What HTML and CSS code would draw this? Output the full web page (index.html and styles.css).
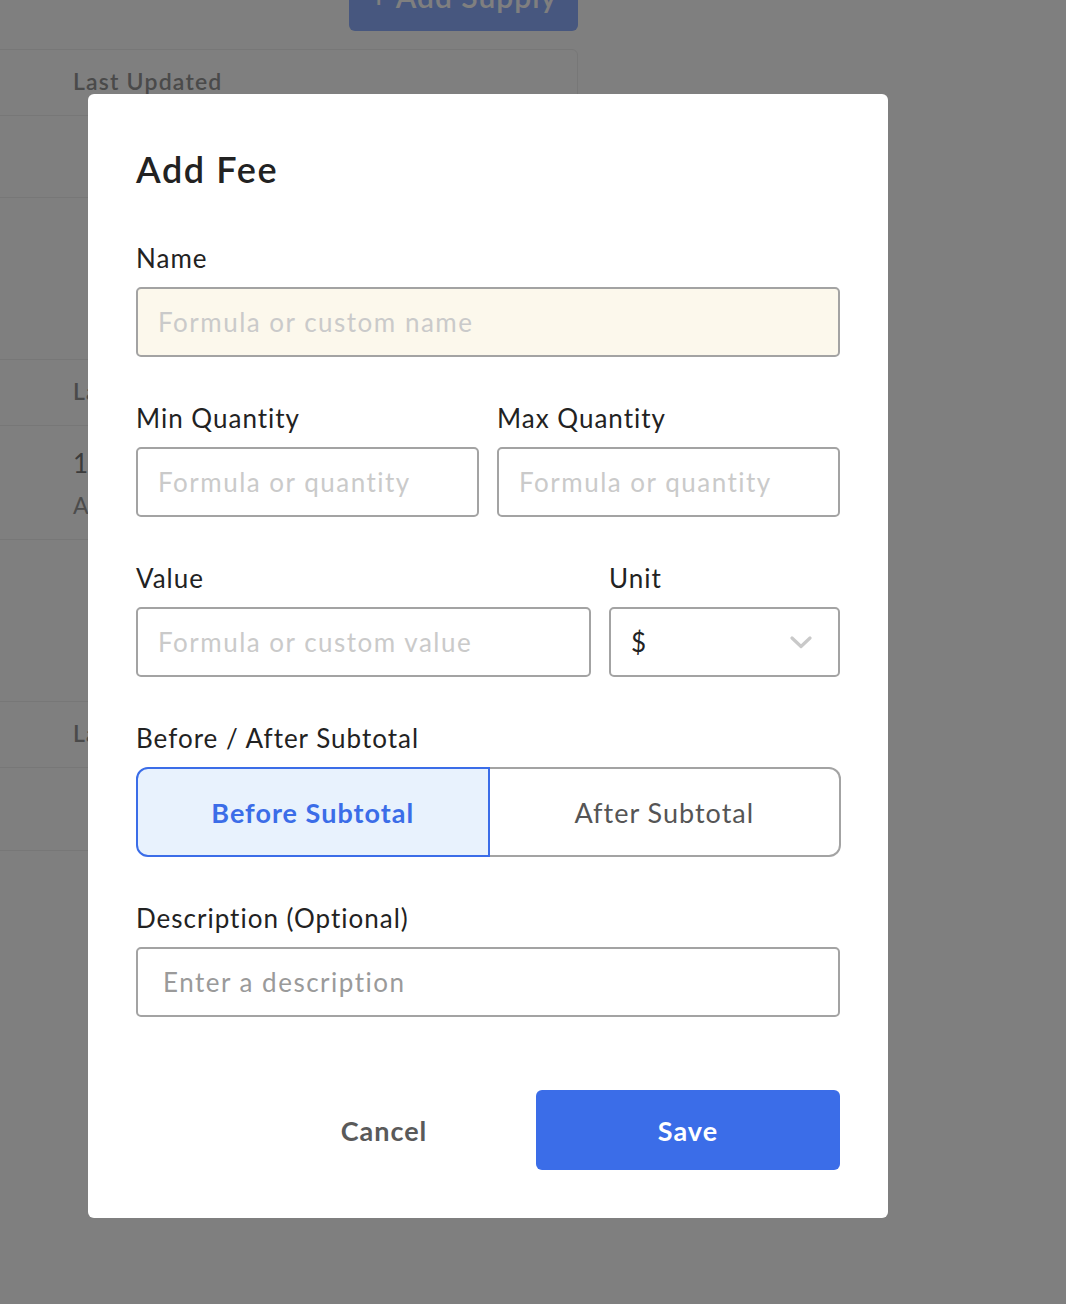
FILE: index.html
```html
<!DOCTYPE html>
<html>
<head>
    <title>Supplies - Add Fee</title>
    <link rel="stylesheet" href="styles.css">
</head>
<body>
    <div class="page">
        <div class="toolbar">
            <button class="add-supply">+ Add Supply</button>
        </div>
        <div class="table-card">
            <div class="row head"><span>Last Updated</span></div>
            <div class="row r82"></div>
            <div class="row r162"></div>
            <div class="row head"><span>Last Updated</span></div>
            <div class="row r114">
                <span class="big">1 day ago</span>
                <span class="small">Admin</span>
            </div>
            <div class="row r162"></div>
            <div class="row head"><span>Last Updated</span></div>
            <div class="row r82"></div>
        </div>
    </div>

    <div class="overlay">
        <div class="modal">
            <h2 class="modal-title">Add Fee</h2>

            <div class="field">
                <label>Name</label>
                <input class="input name-input" type="text" placeholder="Formula or custom name">
            </div>

            <div class="field two-col">
                <div>
                    <label>Min Quantity</label>
                    <input class="input" type="text" placeholder="Formula or quantity">
                </div>
                <div>
                    <label>Max Quantity</label>
                    <input class="input" type="text" placeholder="Formula or quantity">
                </div>
            </div>

            <div class="field value-row">
                <div>
                    <label>Value</label>
                    <input class="input" type="text" placeholder="Formula or custom value">
                </div>
                <div>
                    <label>Unit</label>
                    <div class="select">
                        <span>$</span>
                        <svg width="22" height="13" viewBox="0 0 22 13">
                            <polyline points="2,2 11,10.5 20,2" fill="none" stroke="#c9c9c9" stroke-width="3.2" stroke-linecap="round" stroke-linejoin="round"/>
                        </svg>
                    </div>
                </div>
            </div>

            <div class="field">
                <label>Before / After Subtotal</label>
                <div class="toggle">
                    <button class="toggle-btn active">Before Subtotal</button>
                    <button class="toggle-btn">After Subtotal</button>
                </div>
            </div>

            <div class="field">
                <label>Description (Optional)</label>
                <input class="input desc-input" type="text" placeholder="Enter a description">
            </div>

            <div class="modal-footer">
                <button class="btn-cancel">Cancel</button>
                <button class="btn-save">Save</button>
            </div>
        </div>
    </div>
</body>
</html>
```

FILE: styles.css
```css
body {
    margin: 0;
    padding: 0;
    font-family: Lato, "Open Sans", Arial, sans-serif;
    background-color: #fff;
    height: 1304px;
    overflow: hidden;
}

/* page behind the dialog */
.page {
    width: 578px;
}

.toolbar {
    display: flex;
    justify-content: flex-end;
    height: 31px;
}

.add-supply {
    box-sizing: border-box;
    width: 229px;
    height: 44px;
    margin-top: -13px;
    padding: 0 0 27px;
    border: none;
    border-radius: 6px;
    background-color: #8eaeff;
    color: #fff;
    font-family: inherit;
    font-size: 30px;
    font-weight: 600;
    letter-spacing: 1px;
    line-height: 10px;
}

.table-card {
    margin-top: 18px;
    margin-left: -20px;
    border: 1px solid #eee;
    border-radius: 6px;
}

.row {
    border-bottom: 1px solid #eee;
    box-sizing: border-box;
    padding-left: 92px;
    display: flex;
    flex-direction: column;
    justify-content: center;
}

.row:last-child {
    border-bottom: none;
}

.row.head {
    height: 66px;
    padding-bottom: 3px;
    font-size: 23px;
    font-weight: 600;
    letter-spacing: 1.2px;
    color: #949494;
}

.r82 { height: 82px; }
.r162 { height: 162px; }
.r114 { height: 114px; }

.row .big {
    font-size: 26px;
    color: #777;
}

.row .small {
    margin-top: 12px;
    font-size: 23px;
    color: #999;
}

/* dialog */
.overlay {
    position: fixed;
    inset: 0;
    background-color: rgba(0, 0, 0, 0.5);
    padding: 94px 0 0 88px;
}

.modal {
    width: 800px;
    box-sizing: border-box;
    padding: 48px;
    background-color: #fff;
    border-radius: 6px;
    color: #222;
}

.modal-title {
    margin: 6px 0 52px;
    font-size: 36px;
    line-height: 42px;
    font-weight: 600;
    letter-spacing: 1.6px;
}

.field {
    margin-bottom: 45px;
}

.field label {
    display: block;
    font-size: 26px;
    line-height: 32px;
    margin-bottom: 13px;
    letter-spacing: 1px;
}

.two-col {
    display: grid;
    grid-template-columns: 1fr 1fr;
    gap: 18px;
}

.value-row {
    display: grid;
    grid-template-columns: 455px 1fr;
    gap: 18px;
}

.input {
    display: block;
    width: 100%;
    height: 70px;
    box-sizing: border-box;
    padding: 0 20px;
    border: 2px solid #a3a3a3;
    border-radius: 5px;
    background-color: #fff;
    font-family: inherit;
    font-size: 26px;
    letter-spacing: 1.5px;
    color: #222;
    outline: none;
}

.input::placeholder {
    color: #cacaca;
}

.name-input {
    background-color: #fcf8ec;
}

.desc-input {
    padding-left: 25px;
}

.desc-input::placeholder {
    color: #9a9a9a;
}

.select {
    display: flex;
    align-items: center;
    justify-content: space-between;
    height: 70px;
    box-sizing: border-box;
    padding: 0 26px 0 20px;
    border: 2px solid #a3a3a3;
    border-radius: 5px;
    font-size: 26px;
}

.toggle {
    display: flex;
    width: 705px;
    height: 90px;
}

.toggle-btn {
    flex: 1;
    font-family: inherit;
    font-size: 27px;
    background-color: #fff;
    color: #555;
    border: 2px solid #a3a3a3;
    border-left: none;
    border-radius: 0 12px 12px 0;
    letter-spacing: 1px;
}

.toggle-btn.active {
    background-color: #e8f2fd;
    color: #3b6de8;
    font-weight: 700;
    border: 2px solid #3b6de8;
    border-radius: 12px 0 0 12px;
}

.modal-footer {
    display: flex;
    justify-content: flex-end;
    margin-top: 73px;
}

.btn-cancel,
.btn-save {
    width: 304px;
    height: 80px;
    border: none;
    border-radius: 6px;
    font-family: inherit;
    font-size: 27px;
    font-weight: 700;
    letter-spacing: 1px;
}

.btn-cancel {
    background: none;
    color: #5a5a5a;
}

.btn-save {
    background-color: #3b6de8;
    color: #fff;
}
```
